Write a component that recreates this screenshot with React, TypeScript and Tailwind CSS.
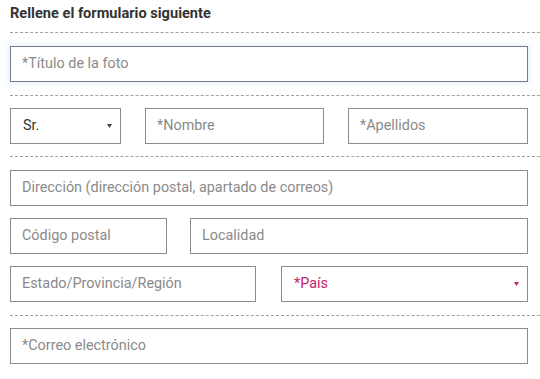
import React from "react";

const font = { fontFamily: "Roboto, 'Liberation Sans', sans-serif" };

function Field({ w, text, focused }: { w: string; text: string; focused?: boolean }) {
  return (
    <div
      className={`${w} h-[36px] flex items-center pl-[11px] bg-white border text-[14.4px] text-[#8a8a8a] ${
        focused
          ? "border-[#6f7b88] shadow-[0_0_5px_2px_rgba(120,170,230,0.18)]"
          : "border-[#8c8c8c]"
      }`}
    >
      {text}
    </div>
  );
}

function Select({ w, text, pink }: { w: string; text: string; pink?: boolean }) {
  return (
    <div
      className={`${w} h-[36px] flex items-center justify-between pl-[12px] pr-[8px] bg-white border border-[#8c8c8c] text-[14.4px] ${
        pink ? "text-[#c3206e]" : "text-[#333]"
      }`}
    >
      <span>{text}</span>
      <svg width="5" height="4" viewBox="0 0 5 4">
        <polygon points="0,0 5,0 2.5,4" fill={pink ? "#c3206e" : "#444"} />
      </svg>
    </div>
  );
}

function Dash() {
  return <div className="h-0 border-t border-dashed border-[#a0a0a0] w-[530px]" />;
}

export default function App() {
  return (
    <div className="w-[540px] h-[379px] bg-white overflow-hidden pl-[10px] pt-[4px]" style={font}>
      <div className="text-[14.6px] font-bold text-[#333] leading-[18px]">Rellene el formulario siguiente</div>
      <div className="mt-[10px]">
        <Dash />
      </div>
      <div className="mt-[13px]">
        <Field w="w-[518px]" text="*Título de la foto" focused />
      </div>
      <div className="mt-[13px]">
        <Dash />
      </div>
      <div className="mt-[12px] flex gap-[24px]">
        <Select w="w-[111px]" text="Sr." />
        <Field w="w-[179px]" text="*Nombre" />
        <Field w="w-[180px]" text="*Apellidos" />
      </div>
      <div className="mt-[12px]">
        <Dash />
      </div>
      <div className="mt-[13px] flex flex-col gap-[12px]">
        <Field w="w-[518px]" text="Dirección (dirección postal, apartado de correos)" />
        <div className="flex gap-[23px]">
          <Field w="w-[157px]" text="Código postal" />
          <Field w="w-[338px]" text="Localidad" />
        </div>
        <div className="flex gap-[25px]">
          <Field w="w-[246px]" text="Estado/Provincia/Región" />
          <Select w="w-[247px]" text="*País" pink />
        </div>
      </div>
      <div className="mt-[13px]">
        <Dash />
      </div>
      <div className="mt-[12px]">
        <Field w="w-[518px]" text="*Correo electrónico" />
      </div>
    </div>
  );
}
